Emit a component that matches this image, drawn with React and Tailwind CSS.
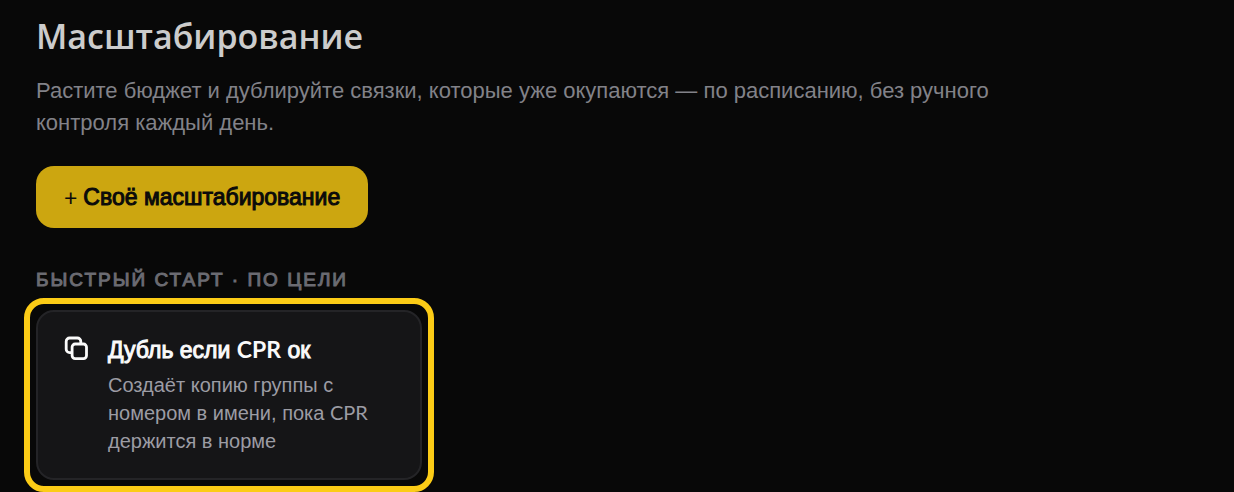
function DuplicateIcon() {
  return (
    <svg
      className="h-6 w-6 shrink-0"
      viewBox="0 0 24 24"
      fill="none"
      stroke="currentColor"
      strokeWidth="2.8"
      strokeLinecap="round"
      strokeLinejoin="round"
      aria-hidden="true"
    >
      <rect x="8.1" y="8" width="14.4" height="14.6" rx="3" />
      <path d="M7.6 16.6H5.6a3.4 3.4 0 0 1-3.4-3.4V5.4A3.4 3.4 0 0 1 5.6 2H13.4A3.4 3.4 0 0 1 16.8 5.4v2" />
    </svg>
  );
}

export default function App() {
  return (
    <main className="min-h-screen bg-[#080808] px-9 pt-3 font-['Liberation_Sans',sans-serif]">
      <h1 className="font-['Open_Sans',sans-serif] text-[34px] leading-12 font-semibold text-[#cccccc]">
        Масштабирование
      </h1>
      <p className="mt-[15px] max-w-[980px] text-[22px] leading-8 text-[#828288]">
        Растите бюджет и дублируйте связки, которые уже окупаются — по расписанию, без ручного
        контроля каждый день.
      </p>
      <button
        type="button"
        className="mt-[27px] flex h-[62px] items-center gap-1.5 rounded-[18px] bg-[#cca610] px-7 text-[23px] text-[#0a0a0a]"
      >
        <span className="font-['Lato',sans-serif]">+</span>
        <span className="[-webkit-text-stroke:1px_currentColor]">Своё масштабирование</span>
      </button>
      <section className="mt-9">
        <h2 className="text-[19px] leading-8 font-normal tracking-[2px] text-[#6b6b72] uppercase [-webkit-text-stroke:1px_currentColor]">
          Быстрый старт · по цели
        </h2>
        <button
          type="button"
          className="relative mt-3.5 flex w-[386px] items-start gap-5 rounded-[18px] border-2 border-[#242427] bg-[#151517] px-[26px] pt-6 pb-[23px] text-left text-[#fafafa] before:absolute before:-inset-[14px] before:rounded-[20px] before:border-6 before:border-[#fccc16]"
        >
          <DuplicateIcon />
          <span className="flex flex-col">
            <span className="text-[23px] leading-7">
              <span className="[-webkit-text-stroke:1px_currentColor]">Дубль если</span>{" "}
              <span className="font-['Lato',sans-serif] leading-none font-bold">CPR</span>{" "}
              <span className="[-webkit-text-stroke:1px_currentColor]">ок</span>
            </span>
            <span className="mt-[7px] text-[20px] leading-7 text-[#9c9ca4]">
              Создаёт копию группы с номером в имени, пока{" "}
              <span className="font-['Lato',sans-serif] leading-none">CPR</span> держится в норме
            </span>
          </span>
        </button>
      </section>
    </main>
  );
}
